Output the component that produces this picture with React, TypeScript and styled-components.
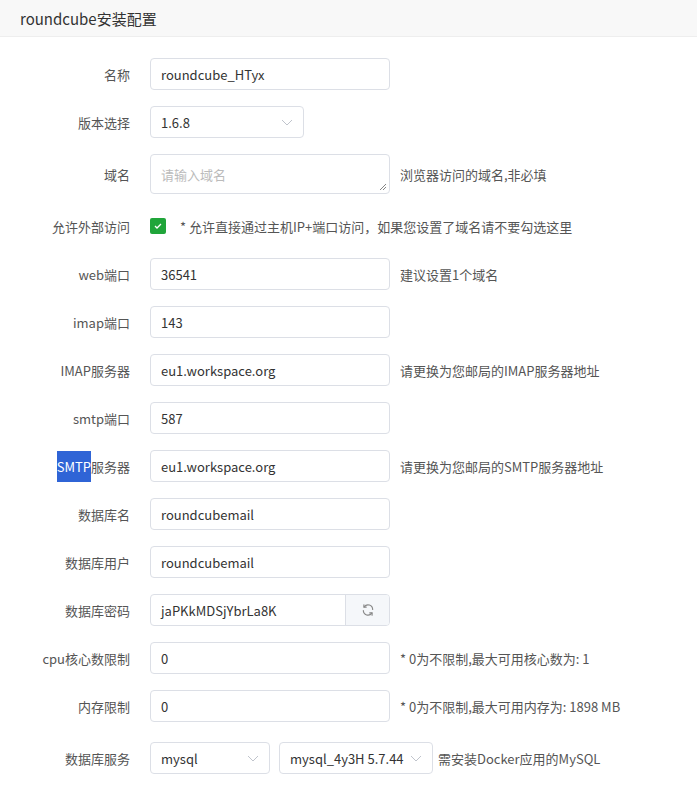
import React from "react";
import styled, { createGlobalStyle } from "styled-components";

const G = createGlobalStyle`
  body { margin:0; background:#fff; font-family: "Noto Sans CJK SC", "Noto Sans", sans-serif; font-size:13px; color:#555; }
`;
const Header = styled.div`
  height:37px; box-sizing:border-box; border-bottom:1px solid #eee; background:#f8f8f8;
  padding-left:20px; display:flex; align-items:center; font-size:15px; color:#333;
`;
const Form = styled.div` padding-top:21px; display:flex; flex-direction:column; gap:16px; `;
const Row = styled.div<{ $mt?: number }>` display:flex; align-items:center; margin-top:${p => p.$mt || 0}px; `;
const Label = styled.div` width:150px; text-align:right; padding-right:20px; box-sizing:border-box; color:#555; flex:none; `;
const Hl = styled.span` background:#2f64d6; color:#fff; padding:6px 0; `;
const Input = styled.div<{ $w?: number; $ph?: boolean }>`
  width:${p => p.$w || 240}px; height:32px; box-sizing:border-box; border:1px solid #dcdfe6; border-radius:4px;
  padding:0 10px; display:flex; align-items:center; color:${p => p.$ph ? "#bbb" : "#333"}; background:#fff; flex:none; position:relative;
`;
const Area = styled(Input)` height:40px; align-items:flex-start; padding-top:10px; `;
const Grip = styled.svg` position:absolute; right:2px; bottom:2px; `;
const Arrow = styled.svg` margin-left:auto; `;
const Hint = styled.div<{ $ml?: number }>` margin-left:${p => p.$ml ?? 10}px; color:#555; `;
const Group = styled.div` display:flex; width:240px; height:32px; border:1px solid #dcdfe6; border-radius:4px; box-sizing:border-box; overflow:hidden; `;
const GInput = styled.div` flex:1; padding:0 10px; display:flex; align-items:center; color:#333; `;
const GBtn = styled.div` width:43px; border-left:1px solid #dcdfe6; background:#f5f7fa; display:flex; align-items:center; justify-content:center; `;
const Check = styled.div` width:16px; height:16px; border-radius:2px; background:#20a53a; display:flex; align-items:center; justify-content:center; `;

const Chev = () => (
  <Arrow width="12" height="12" viewBox="0 0 12 12"><path d="M1 4l5 5 5-5" fill="none" stroke="#c0c4cc" strokeWidth="1" /></Arrow>
);

const rows: [string, string, string?][] = [
  ["web端口", "36541", "建议设置1个域名"],
  ["imap端口", "143"],
  ["IMAP服务器", "eu1.workspace.org", "请更换为您邮局的IMAP服务器地址"],
  ["smtp端口", "587"],
];

export default function App() {
  return (
    <>
      <G />
      <Header>roundcube安装配置</Header>
      <Form>
        <Row><Label>名称</Label><Input>roundcube_HTyx</Input></Row>
        <Row><Label>版本选择</Label><Input $w={154}>1.6.8<Chev /></Input></Row>
        <Row>
          <Label>域名</Label>
          <Area $ph>请输入域名<Grip width="8" height="8" viewBox="0 0 8 8"><path d="M7 1L1 7M7 4L4 7" stroke="#666" strokeWidth="0.8" /></Grip></Area>
          <Hint>浏览器访问的域名,非必填</Hint>
        </Row>
        <Row style={{ height: 32 }}>
          <Label>允许外部访问</Label>
          <Check><svg width="10" height="10" viewBox="0 0 10 10"><path d="M2 5l2 2 4-4" fill="none" stroke="#fff" strokeWidth="1.3" /></svg></Check>
          <Hint $ml={14}>* 允许直接通过主机IP+端口访问，如果您设置了域名请不要勾选这里</Hint>
        </Row>
        {rows.map(([l, v, h]) => (
          <Row key={l}><Label>{l}</Label><Input>{v}</Input>{h && <Hint>{h}</Hint>}</Row>
        ))}
        <Row><Label><Hl>SMTP</Hl>服务器</Label><Input>eu1.workspace.org</Input><Hint>请更换为您邮局的SMTP服务器地址</Hint></Row>
        <Row><Label>数据库名</Label><Input>roundcubemail</Input></Row>
        <Row><Label>数据库用户</Label><Input>roundcubemail</Input></Row>
        <Row>
          <Label>数据库密码</Label>
          <Group>
            <GInput>jaPKkMDSjYbrLa8K</GInput>
            <GBtn>
              <svg width="14" height="14" viewBox="0 0 24 24" fill="none" stroke="#888" strokeWidth="2" strokeLinecap="round">
                <path d="M20 11A8 8 0 0 0 5.5 6.5M4 13a8 8 0 0 0 14.5 4.5" />
                <path d="M5 3v4h4M19 21v-4h-4" />
              </svg>
            </GBtn>
          </Group>
        </Row>
        <Row><Label>cpu核心数限制</Label><Input>0</Input><Hint>* 0为不限制,最大可用核心数为: 1</Hint></Row>
        <Row><Label>内存限制</Label><Input>0</Input><Hint>* 0为不限制,最大可用内存为: 1898 MB</Hint></Row>
        <Row $mt={4}>
          <Label>数据库服务</Label>
          <Input $w={120}>mysql<Chev /></Input>
          <Input $w={154} style={{ marginLeft: 9 }}>mysql_4y3H 5.7.44<Chev /></Input>
          <Hint $ml={5}>需安装Docker应用的MySQL</Hint>
        </Row>
      </Form>
    </>
  );
}
